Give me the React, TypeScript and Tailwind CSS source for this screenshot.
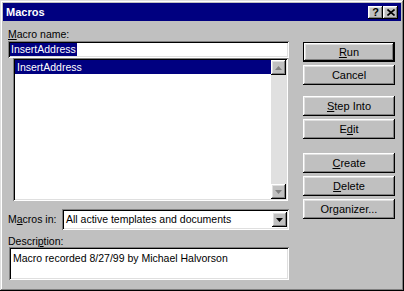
import type { ReactNode } from 'react';

const raised =
  'shadow-[inset_-1px_-1px_0_#000,inset_1px_1px_0_#fff,inset_-2px_-2px_0_#808080,inset_2px_2px_0_#dfdfdf]';
const sunken =
  'shadow-[inset_1px_1px_0_#808080,inset_-1px_-1px_0_#fff,inset_2px_2px_0_#000,inset_-2px_-2px_0_#dfdfdf]';

function Key({ children }: { children: ReactNode }) {
  return <span className="underline underline-offset-[1px]">{children}</span>;
}

function Btn({ children, primary }: { children: ReactNode; primary?: boolean }) {
  return (
    <div
      className={`h-[20px] w-[92px] flex items-center justify-center bg-[#c0c0c0] text-[11px] ${
        primary ? 'border border-black' : ''
      } ${raised}`}
    >
      <span className="leading-none">{children}</span>
    </div>
  );
}

function Arrow({ down, disabled }: { down?: boolean; disabled?: boolean }) {
  const fill = disabled ? '#808080' : '#000';
  return (
    <div className={`w-[15px] h-[15px] bg-[#c0c0c0] flex items-center justify-center ${raised}`}>
      <svg width="7" height="4" viewBox="0 0 7 4">
        {down ? (
          <polygon points="0,0 7,0 3.5,4" fill={fill} />
        ) : (
          <polygon points="0,4 7,4 3.5,0" fill={fill} />
        )}
      </svg>
    </div>
  );
}

function CaptionBtn({ children }: { children: ReactNode }) {
  return (
    <div
      className={`w-[15px] h-[13px] bg-[#c0c0c0] flex items-center justify-center text-black font-bold text-[11px] leading-none ${raised}`}
    >
      {children}
    </div>
  );
}

export default function App() {
  return (
    <div
      className="w-[404px] h-[291px] bg-[#c0c0c0] p-[3px] text-black text-[10.5px] shadow-[inset_-1px_-1px_0_#000,inset_1px_1px_0_#dfdfdf,inset_-2px_-2px_0_#808080,inset_2px_2px_0_#fff]"
      style={{ fontFamily: '"Liberation Sans", Arial, sans-serif' }}
    >
      <div className="h-[18px] bg-[#000080] flex items-center pl-[3px] pr-[3px]">
        <span className="text-white font-bold text-[11px] flex-1">Macros</span>
        <div className="flex">
          <CaptionBtn>?</CaptionBtn>
          <CaptionBtn>
            <svg width="8" height="7" viewBox="0 0 8 7">
              <path d="M0.5 0.5 L7.5 6.5 M7.5 0.5 L0.5 6.5" stroke="#000" strokeWidth="1.6" />
            </svg>
          </CaptionBtn>
        </div>
      </div>

      <div className="flex pl-[5px] pt-[7px]">
        <div className="w-[281px] flex flex-col">
          <div className="h-[13px] leading-[13px]">
            <Key>M</Key>acro name:
          </div>
          <div className={`h-[17px] bg-white flex items-center pl-[2px] ${sunken}`}>
            <span className="bg-[#000080] text-white leading-[13px] px-[1px]">InsertAddress</span>
          </div>
          <div className={`ml-[5px] w-[275px] h-[143px] bg-white flex p-[2px] ${sunken}`}>
            <div className="flex-1">
              <div className="h-[14px] bg-[#000080] text-white leading-[14px] pl-[2px]">InsertAddress</div>
            </div>
            <div className="w-[15px] flex flex-col bg-[#e0e0e0]">
              <Arrow disabled />
              <div className="flex-1" />
              <Arrow down disabled />
            </div>
          </div>

          <div className="mt-[8px] h-[21px] flex items-center">
            <div className="w-[54px]">
              M<Key>a</Key>cros in:
            </div>
            <div className={`w-[227px] h-[21px] bg-white flex items-center p-[2px] ${sunken}`}>
              <span className="flex-1 pl-[2px]">All active templates and documents</span>
              <Arrow down />
            </div>
          </div>

          <div className="mt-[5px] h-[12px] leading-[12px]">
            Descri<Key>p</Key>tion:
          </div>
          <div className={`ml-[1px] w-[280px] h-[33px] bg-white pl-[4px] pt-[4px] ${sunken}`}>
            Macro recorded 8/27/99 by Michael Halvorson
          </div>
        </div>

        <div className="ml-[14px] pt-[14px] flex flex-col gap-[3px]">
          <Btn primary>
            <Key>R</Key>un
          </Btn>
          <Btn>Cancel</Btn>
          <div className="mt-[8px]">
            <Btn>
              <Key>S</Key>tep Into
            </Btn>
          </div>
          <Btn>
            E<Key>d</Key>it
          </Btn>
          <div className="mt-[11px]">
            <Btn>
              <Key>C</Key>reate
            </Btn>
          </div>
          <Btn>
            <Key>D</Key>elete
          </Btn>
          <Btn>
            Or<Key>g</Key>anizer...
          </Btn>
        </div>
      </div>
    </div>
  );
}
